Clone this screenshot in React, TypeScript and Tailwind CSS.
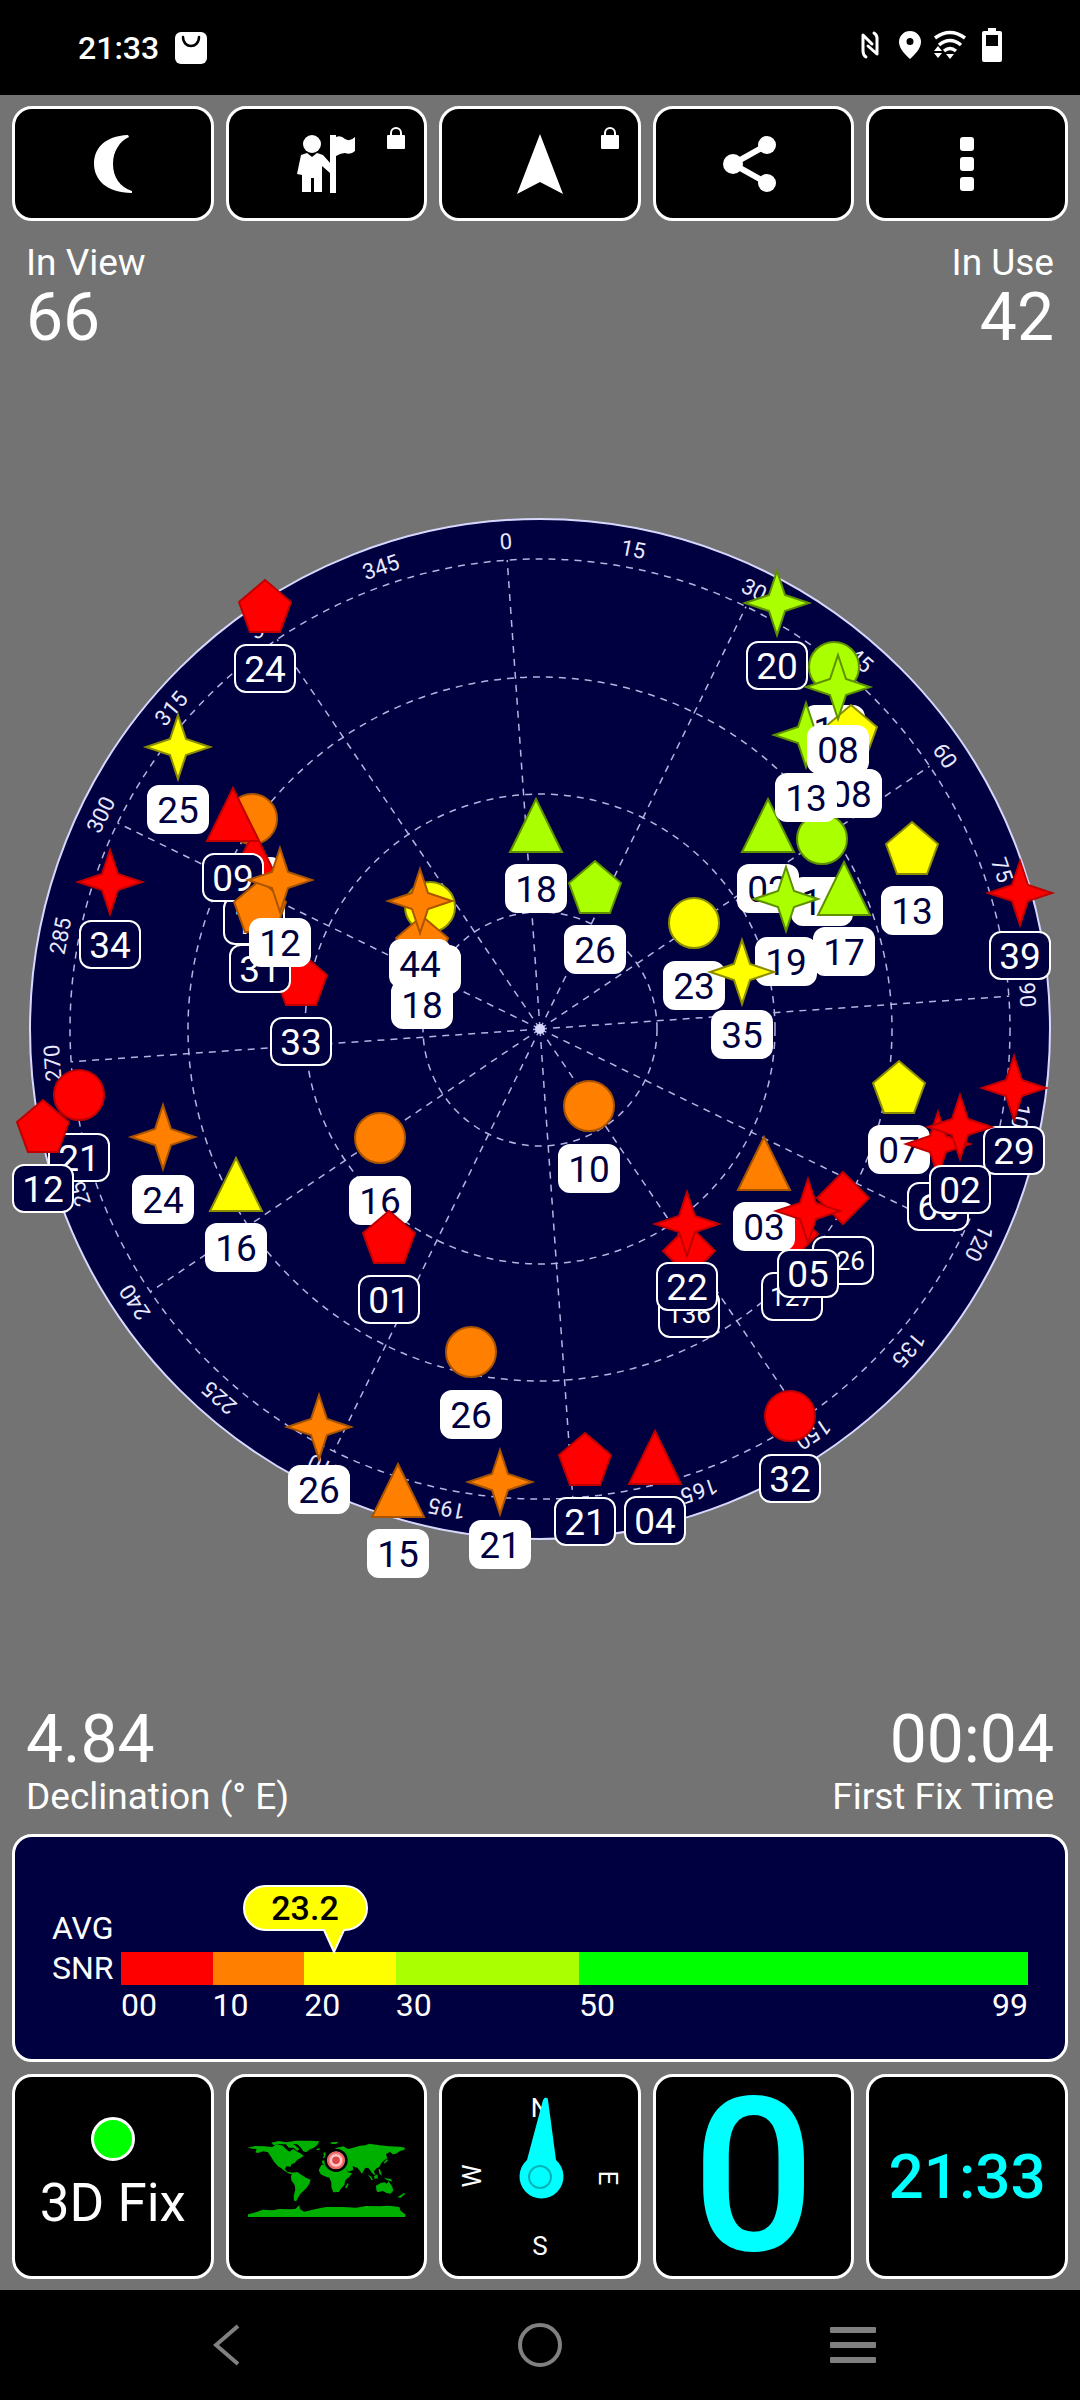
import React from "react";

type Shape = "circle" | "triangle" | "pentagon" | "star" | "diamond";

type Satellite = {
    id: string,
    shape: Shape,
    color: string,
    used: boolean,
    x: number,
    y: number
};

const RED = "#ff0000";
const ORANGE = "#ff8000";
const YELLOW = "#ffff00";
const LIME = "#aaff00";
const NAVY = "#000040";

// darker edge drawn around every marker
const edges: Record<string, string> = {
    [RED]: "#c00000",
    [ORANGE]: "#a85400",
    [YELLOW]: "#8c8c00",
    [LIME]: "#5f9000"
};

// x / y are chart units, zenith sits at 540, 540. Later entries are painted on top.
const satellites: Satellite[] = [
    { id: "24", shape: "pentagon", color: RED, used: false, x: 265, y: 117 },
    { id: "25", shape: "star", color: YELLOW, used: true, x: 178, y: 258 },
    { id: "34", shape: "star", color: RED, used: false, x: 110, y: 393 },
    { id: "20", shape: "circle", color: ORANGE, used: true, x: 252, y: 330 },
    { id: "14", shape: "triangle", color: RED, used: false, x: 254, y: 369 },
    { id: "09", shape: "triangle", color: RED, used: false, x: 233, y: 326 },
    { id: "33", shape: "pentagon", color: RED, used: false, x: 301, y: 490 },
    { id: "31", shape: "pentagon", color: ORANGE, used: false, x: 260, y: 417 },
    { id: "12", shape: "star", color: ORANGE, used: true, x: 280, y: 391 },
    { id: "11", shape: "circle", color: YELLOW, used: true, x: 430, y: 418 },
    { id: "18", shape: "pentagon", color: ORANGE, used: true, x: 422, y: 453 },
    { id: "44", shape: "star", color: ORANGE, used: true, x: 420, y: 412 },
    { id: "18", shape: "triangle", color: LIME, used: true, x: 536, y: 337 },
    { id: "26", shape: "pentagon", color: LIME, used: true, x: 595, y: 398 },
    { id: "20", shape: "star", color: LIME, used: false, x: 777, y: 114 },
    { id: "02", shape: "triangle", color: LIME, used: true, x: 768, y: 337 },
    { id: "14", shape: "circle", color: LIME, used: true, x: 822, y: 350 },
    { id: "14", shape: "circle", color: LIME, used: true, x: 834, y: 178 },
    { id: "08", shape: "pentagon", color: YELLOW, used: true, x: 851, y: 242 },
    { id: "13", shape: "star", color: LIME, used: true, x: 806, y: 246 },
    { id: "08", shape: "star", color: LIME, used: true, x: 838, y: 198 },
    { id: "19", shape: "star", color: LIME, used: true, x: 786, y: 410 },
    { id: "17", shape: "triangle", color: LIME, used: true, x: 844, y: 400 },
    { id: "13", shape: "pentagon", color: YELLOW, used: true, x: 912, y: 359 },
    { id: "23", shape: "circle", color: YELLOW, used: true, x: 694, y: 434 },
    { id: "35", shape: "star", color: YELLOW, used: true, x: 742, y: 483 },
    { id: "39", shape: "star", color: RED, used: false, x: 1020, y: 404 },
    { id: "21", shape: "circle", color: RED, used: false, x: 79, y: 606 },
    { id: "12", shape: "pentagon", color: RED, used: false, x: 43, y: 637 },
    { id: "24", shape: "star", color: ORANGE, used: true, x: 163, y: 648 },
    { id: "16", shape: "triangle", color: YELLOW, used: true, x: 236, y: 696 },
    { id: "16", shape: "circle", color: ORANGE, used: true, x: 380, y: 649 },
    { id: "01", shape: "pentagon", color: RED, used: false, x: 389, y: 748 },
    { id: "26", shape: "circle", color: ORANGE, used: true, x: 471, y: 863 },
    { id: "26", shape: "star", color: ORANGE, used: true, x: 319, y: 938 },
    { id: "15", shape: "triangle", color: ORANGE, used: true, x: 398, y: 1002 },
    { id: "21", shape: "star", color: ORANGE, used: true, x: 500, y: 993 },
    { id: "21", shape: "pentagon", color: RED, used: false, x: 585, y: 970 },
    { id: "04", shape: "triangle", color: RED, used: false, x: 655, y: 969 },
    { id: "32", shape: "circle", color: RED, used: false, x: 790, y: 927 },
    { id: "10", shape: "circle", color: ORANGE, used: true, x: 589, y: 617 },
    { id: "136", shape: "diamond", color: RED, used: false, x: 689, y: 762 },
    { id: "22", shape: "star", color: RED, used: false, x: 687, y: 735 },
    { id: "127", shape: "diamond", color: RED, used: false, x: 792, y: 745 },
    { id: "03", shape: "triangle", color: ORANGE, used: true, x: 764, y: 675 },
    { id: "126", shape: "diamond", color: RED, used: false, x: 843, y: 709 },
    { id: "05", shape: "star", color: RED, used: false, x: 808, y: 722 },
    { id: "07", shape: "pentagon", color: YELLOW, used: true, x: 899, y: 598 },
    { id: "66", shape: "star", color: RED, used: false, x: 938, y: 655 },
    { id: "29", shape: "star", color: RED, used: false, x: 1014, y: 599 },
    { id: "02", shape: "star", color: RED, used: false, x: 960, y: 638 }
];

const paths: Record<Exclude<Shape, "circle">, string> = {
    triangle: "M0 -27L26 26H-26Z",
    pentagon: "M0 -26L26 -4L15 26H-15L-26 -4Z",
    star: "M0 -32L8 -8L32 0L8 8L0 32L-8 8L-32 0L-8 -8Z",
    diamond: "M0 -26L26 0L0 26L-26 0Z"
};

const Marker: React.FC<{ sat: Satellite }> = ({ sat }) => {
    const edge = edges[sat.color];
    return (
        <g transform={`translate(${sat.x} ${sat.y})`}>
            {sat.shape === "circle" ? (
                <circle r="25" fill={sat.color} stroke={edge} strokeWidth="2" />
            ) : (
                <path d={paths[sat.shape]} fill={sat.color} stroke={edge} strokeWidth="2" />
            )}
            <rect
                x="-30"
                y="39"
                width="60"
                height="47"
                rx="11"
                fill={sat.used ? "#fff" : NAVY}
                stroke="#fff"
                strokeWidth="2"
            />
            <text
                y={sat.id.length > 2 ? 72 : 76}
                textAnchor="middle"
                fontSize={sat.id.length > 2 ? 26 : 37}
                fill={sat.used ? NAVY : "#fff"}
            >
                {sat.id}
            </text>
        </g>
    );
};

const ROTATION = -4;
const bearings = Array.from({ length: 24 }, (_, i) => i * 15);

const SkyPlot: React.FC = () => {
    return (
        <svg viewBox="0 0 1080 1080" className="w-full overflow-visible" role="img" aria-label="Satellites in view">
            <circle cx="540" cy="540" r="510" fill={NAVY} stroke="#d8d8ff" strokeWidth="2" />
            <g transform="translate(540 540)" fill="none" stroke="#b4b4e0" strokeWidth="1.5" strokeDasharray="7 6">
                {[117, 235, 352, 470].map((r) => (
                    <circle key={r} r={r} />
                ))}
                {bearings.filter((b) => b % 30 === 0).map((b) => (
                    <line key={b} y2="-470" transform={`rotate(${b + ROTATION})`} />
                ))}
            </g>
            <circle cx="540" cy="540" r="5" fill="#d8d8ff" />
            <g transform="translate(540 540)" fill="#e8e8ff" fontSize="22" textAnchor="middle">
                {bearings.map((b) => (
                    <text key={b} y="-481" transform={`rotate(${b + ROTATION})`}>{b}</text>
                ))}
            </g>
            {satellites.map((sat, i) => (
                <Marker key={i} sat={sat} />
            ))}
        </svg>
    );
};

const StatusBar: React.FC = () => {
    return (
        <header className="flex h-[95px] items-center justify-between bg-black pl-[78px] pr-[60px]">
            <div className="flex items-center gap-4">
                <span className="text-[32px] font-medium leading-[40px]">21:33</span>
                <svg width="32" height="32" viewBox="0 0 32 32">
                    <rect width="32" height="32" rx="6" fill="#fff" />
                    <path d="M8 5C8 17 24 17 24 5" fill="none" stroke="#000" strokeWidth="2.5" strokeLinecap="round" />
                </svg>
            </div>
            <svg width="180" height="60" viewBox="0 0 180 60" fill="#fff">
                <g fill="none" stroke="#fff" strokeWidth="3" strokeLinejoin="round" strokeLinecap="round">
                    <path d="M26 39Q23 37 23 33V17L32 26" />
                    <path d="M34 15Q37 17 37 20V36L28 28" />
                </g>
                <path fillRule="evenodd" d="M70 13a11 11 0 0 1 11 11c0 7-7 13-11 17c-4-4-11-10-11-17a11 11 0 0 1 11-11zm0 7a3.500 3.500 0 1 0 0 7a3.500 3.500 0 1 0 0-7z" />
                <g fill="none" stroke="#fff" strokeWidth="3.5">
                    <path d="M95 20Q110 9 125 20" />
                    <path d="M99 27Q110 18 121 27" />
                    <path d="M104 33Q110 28 116 33" />
                </g>
                <path d="M106 36H114L110 41Z M94 33L98 28L102 33Z M94 35H102L98 40Z" />
                <path fillRule="evenodd" d="M148 10H156V13H160Q162 13 162 15V42Q162 44 160 44H144Q142 44 142 42V15Q142 13 144 13H148ZM146 17V28H158V17Z" />
            </svg>
        </header>
    );
};

const Lock: React.FC = () => {
    return (
        <svg className="absolute right-[18px] top-[18px]" width="20" height="22" viewBox="0 0 20 22">
            <path d="M5 9V6a5 5 0 0 1 10 0V9" fill="none" stroke="#fff" strokeWidth="2" />
            <rect x="1" y="8" width="18" height="14" rx="1" fill="#fff" />
        </svg>
    );
};

const ToolButton: React.FC<{
    label: string,
    locked?: boolean,
    children: React.ReactNode
}> = ({ label, locked, children }) => {
    return (
        <button
            type="button"
            aria-label={label}
            className="relative flex h-[115px] items-center justify-center rounded-[20px] border-3 border-white bg-black"
        >
            {children}
            {locked && <Lock />}
        </button>
    );
};

const Toolbar: React.FC = () => {
    return (
        <nav className="grid grid-cols-5 gap-3">
            <ToolButton label="Night mode">
                <svg width="38" height="58" viewBox="0 0 38 58" fill="#fff">
                    <path d="M34 0C10 1 0 14 0 29S12 58 38 58V56C26 52 19 42 19 29S26 6 35 2Z" />
                </svg>
            </ToolButton>
            <ToolButton label="Waypoints" locked>
                <svg width="58" height="58" viewBox="0 0 58 58" fill="#fff">
                    <circle cx="15" cy="9" r="9" />
                    <path d="M4 20L10 18L15 22L20 18L26 20L34 29L36 36L33 38L25 31V57H17V43H14V57H5V40L0 39Z" />
                    <rect x="33" width="6" height="58" />
                    <path d="M39 2Q44 0 48 4Q53 7 58 2V16Q54 20 48 18Q44 18 39 21Z" />
                </svg>
            </ToolButton>
            <ToolButton label="Navigate" locked>
                <svg width="46" height="60" viewBox="0 0 46 60" fill="#fff">
                    <path d="M23 0L46 60L23 48L0 60Z" />
                </svg>
            </ToolButton>
            <ToolButton label="Share">
                <svg className="mr-2" width="54" height="56" viewBox="0 0 54 56" fill="#fff">
                    <path d="M44 9L10 28L44 47" fill="none" stroke="#fff" strokeWidth="6" />
                    <circle cx="44" cy="9" r="9" />
                    <circle cx="10" cy="28" r="10" />
                    <circle cx="44" cy="47" r="9" />
                </svg>
            </ToolButton>
            <ToolButton label="More options">
                <svg width="14" height="54" viewBox="0 0 14 54" fill="#fff">
                    <rect width="14" height="14" rx="3" />
                    <rect y="20" width="14" height="14" rx="3" />
                    <rect y="40" width="14" height="14" rx="3" />
                </svg>
            </ToolButton>
        </nav>
    );
};

const scale = [
    { from: 0, span: 10, className: "bg-[#ff0000]" },
    { from: 10, span: 10, className: "bg-[#ff8000]" },
    { from: 20, span: 10, className: "bg-[#ffff00]" },
    { from: 30, span: 20, className: "bg-[#aaff00]" },
    { from: 50, span: 49, className: "bg-[#00ff00]" }
];

const SnrPanel: React.FC = () => {
    const average = 23.2;

    return (
        <section className="flex h-[228px] items-start gap-1 rounded-[20px] border-3 border-white bg-[#000040] px-[37px] pt-[71px]">
            <div className="w-[65px] text-[32px] leading-[40px]">
                <div>AVG</div>
                <div>SNR</div>
            </div>
            <div className="relative flex-1 pt-[44px]">
                {/* callout, its tip points at the average */}
                <svg
                    className="absolute -top-[24px] -ml-[91px]"
                    style={{ left: `${(average / 99) * 100}%` }}
                    width="126"
                    height="70"
                    viewBox="0 0 126 70"
                >
                    <path
                        d="M23 2H102A22 22 0 0 1 102 46H101L91 68L81 46H23A22 22 0 0 1 23 2Z"
                        fill={YELLOW}
                        stroke="#fff"
                        strokeWidth="2"
                    />
                    <text x="62" y="36" textAnchor="middle" fontSize="34" fontWeight="500" fill="#000">
                        {average}
                    </text>
                </svg>
                <div className="flex">
                    {scale.map((band) => (
                        <div key={band.from} style={{ flexGrow: band.span, flexBasis: 0 }}>
                            <div className={`h-[33px] ${band.className}`} />
                            <div className="flex h-[40px] justify-between text-[32px] leading-[40px]">
                                <span>{String(band.from).padStart(2, "0")}</span>
                                {band.from === 50 && <span>99</span>}
                            </div>
                        </div>
                    ))}
                </div>
            </div>
        </section>
    );
};

const tileClass = "flex h-[205px] flex-col items-center justify-center rounded-[20px] border-3 border-white bg-black";

const WorldMap: React.FC = () => {
    return (
        <svg width="180" height="100" viewBox="0 0 540 300" fill="#00b000">
            {/* americas and greenland */}
            <path d="M36 61L60 57L84 58L108 60L122 52L140 56L150 66L160 74L172 66L180 72L192 78L203 86L194 93L184 98L176 108L166 112L164 119L152 118L146 126L154 134L164 136L170 142L160 140L146 132L136 124L126 118L114 104L104 88L96 76L82 73L66 78L58 76L62 66L48 65Z" />
            <path d="M106 47L128 42L150 46L166 48L178 56L190 66L184 72L172 62L158 62L150 52L130 52L112 54Z" />
            <path d="M150 46L180 41L222 41L250 43L244 54L234 62L220 68L210 76L202 73L196 64L184 52L166 52Z" />
            <path d="M168 137L184 135L196 143L210 152L224 158L220 170L212 182L202 192L192 202L186 212L181 222L174 221L173 206L178 188L176 174L166 160L165 148Z" />
            {/* africa */}
            <path d="M256 114L272 110L292 114L310 118L326 119L336 136L348 138L342 148L328 160L325 174L316 184L308 195L292 196L286 180L286 166L280 152L266 148L254 142L248 130Z" />
            <path d="M335 168L338 172L332 184L327 181Z" />
            {/* eurasia */}
            <path d="M259 110L258 101L270 98L268 88L282 82L290 70L302 62L322 58L336 66L352 62L372 56L388 55L400 50L430 55L460 58L490 59L508 62L504 69L492 72L480 80L470 82L462 74L450 82L454 94L444 100L436 108L430 120L422 124L414 132L418 146L408 138L398 124L388 122L378 140L370 130L364 122L350 118L352 128L338 134L326 122L314 118L304 110L292 106L276 106L268 112Z" />
            <path d="M262 78L268 76L271 92L260 93L264 86Z M242 65L252 64L250 69L242 69Z M282 46L308 45L300 51L288 51Z M452 97L457 99L448 109L442 108Z" />
            {/* australia and islands */}
            <path d="M420 176L434 168L446 166L452 170L458 163L468 178L472 190L464 200L452 198L440 192L424 196L421 188Z" />
            <path d="M396 143L404 148L412 160L406 158ZM414 148L424 142L426 154L416 156ZM444 152L464 156L470 164L454 160ZM428 126L432 126L438 146L430 140ZM504 198L508 200L494 212L484 211Z" />
            {/* antarctica */}
            <path d="M36 262L60 256L80 248L110 250L130 246L160 247L178 246L190 234L192 246L204 254L240 246L270 240L320 240L360 242L390 237L430 238L460 236L490 240L494 252L508 262V270H36Z" />
            <circle cx="300" cy="100" r="31" fill="#f88" stroke="#000" strokeWidth="8" />
            <circle cx="300" cy="100" r="24" fill="none" stroke="#e06060" strokeWidth="4" />
            <circle cx="300" cy="100" r="15" fill="#d84848" stroke="#ffc8c8" strokeWidth="7" />
        </svg>
    );
};

const Compass: React.FC = () => {
    return (
        <svg width="196" height="200" viewBox="2 0 196 200" fill="#fff" fontSize="26" textAnchor="middle" className="shrink-0">
            <text x="100" y="40">N</text>
            <text x="100" y="178">S</text>
            <text transform="translate(41 99) rotate(-90)">W</text>
            <text transform="translate(159 101) rotate(90)">E</text>
            <path d="M87 83L103 23Q106 18 108 23L116 83A22 22 0 1 1 87 83Z" fill="#00ffff" />
            <circle cx="100" cy="100" r="11" fill="none" stroke="#00b4b8" strokeWidth="2" />
        </svg>
    );
};

const App: React.FC = () => {
    return (
        <div className="flex min-h-screen flex-col bg-[#737373] font-['Roboto','Noto_Sans',sans-serif] text-white">
            <StatusBar />
            <main className="flex flex-1 flex-col pb-[11px] pt-[11px]">
                <div className="px-3">
                    <Toolbar />
                </div>
                <div className="flex justify-between px-[26px] pt-[22px]">
                    <div>
                        <div className="text-[37px] leading-[40px]">In View</div>
                        <div className="text-[66px] leading-[70px]">66</div>
                    </div>
                    <div className="text-right">
                        <div className="text-[37px] leading-[40px]">In Use</div>
                        <div className="text-[66px] leading-[70px]">42</div>
                    </div>
                </div>
                <div className="flex flex-1 items-center justify-center">
                    <SkyPlot />
                </div>
                <div className="flex justify-between px-[26px] pb-[15px]">
                    <div>
                        <div className="text-[66px] leading-[70px]">4.84</div>
                        <div className="text-[37px] leading-[44px]">Declination (° E)</div>
                    </div>
                    <div className="text-right">
                        <div className="text-[66px] leading-[70px]">00:04</div>
                        <div className="text-[37px] leading-[44px]">First Fix Time</div>
                    </div>
                </div>
                <div className="flex flex-col gap-3 px-3">
                    <SnrPanel />
                    <div className="grid grid-cols-5 gap-3">
                        <div className={tileClass}>
                            <div className="size-[44px] rounded-full border-3 border-white bg-[#00ff00]" />
                            <div className="mt-2 text-[53px] leading-[68px]">3D Fix</div>
                        </div>
                        <div className={tileClass}>
                            <WorldMap />
                        </div>
                        <div className={tileClass}>
                            <Compass />
                        </div>
                        <div className={`${tileClass} text-[216px] font-medium leading-none text-[#00ffff]`}>
                            0
                        </div>
                        <div className={`${tileClass} text-[62px] font-medium leading-none text-[#00ffff]`}>
                            21:33
                        </div>
                    </div>
                </div>
            </main>
            <footer className="grid h-[110px] grid-cols-3 items-center justify-items-center bg-black px-[70px]">
                <button type="button" aria-label="Back">
                    <svg width="28" height="44" viewBox="0 0 28 44">
                        <path d="M25 3L3 22L25 41" fill="none" stroke="#808080" strokeWidth="4" />
                    </svg>
                </button>
                <button type="button" aria-label="Home">
                    <svg width="46" height="46" viewBox="0 0 46 46">
                        <circle cx="23" cy="23" r="20" fill="none" stroke="#808080" strokeWidth="4" />
                    </svg>
                </button>
                <button type="button" aria-label="Recent apps">
                    <svg width="46" height="36" viewBox="0 0 46 36" fill="#808080">
                        <rect width="46" height="6" rx="1" />
                        <rect y="15" width="46" height="6" rx="1" />
                        <rect y="30" width="46" height="6" rx="1" />
                    </svg>
                </button>
            </footer>
        </div>
    );
};

export default App;
